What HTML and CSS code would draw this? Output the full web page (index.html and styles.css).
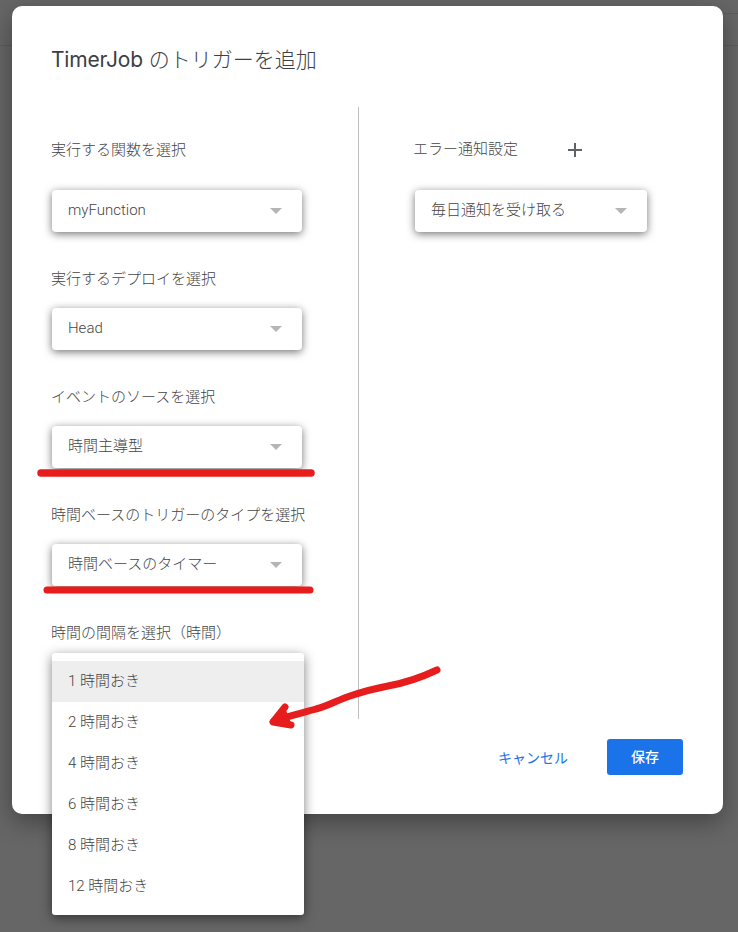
FILE: index.html
```html
<!DOCTYPE html>
<html lang="ja">
<head>
	<meta charset="UTF-8">
	<title>TimerJob のトリガーを追加</title>
	<link rel="stylesheet" href="styles.css">
</head><body>
<div class="PageBar"><div class="PageBarTop"></div></div>

<div class="Dialog">
	<h1 class="Title"><span class="TitleName">TimerJob</span> のトリガーを追加</h1>
	<div class="Columns">
		<div class="ColLeft">
			<div class="Field">
				<div class="Label">実行する関数を選択</div>
				<div class="Select"><span>myFunction</span><i class="Caret"></i></div>
			</div>
			<div class="Field">
				<div class="Label">実行するデプロイを選択</div>
				<div class="Select"><span>Head</span><i class="Caret"></i></div>
			</div>
			<div class="Field">
				<div class="Label">イベントのソースを選択</div>
				<div class="Select"><span class="Ja">時間主導型</span><i class="Caret"></i></div>
			</div>
			<div class="Field">
				<div class="Label">時間ベースのトリガーのタイプを選択</div>
				<div class="Select"><span class="Ja">時間ベースのタイマー</span><i class="Caret"></i></div>
			</div>
			<div class="Field">
				<div class="Label">時間の間隔を選択（時間）</div>
			</div>
		</div>
		<div class="ColRight">
			<div class="Field">
				<div class="Label LabelAdd">エラー通知設定
					<svg class="Plus" width="14" height="14" viewBox="0 0 14 14"><path d="M7 0v14M0 7h14" stroke="#5f6368" stroke-width="2" fill="none"/></svg>
				</div>
				<div class="Select SelectWide"><span class="Ja">毎日通知を受け取る</span><i class="Caret"></i></div>
			</div>
		</div>
	</div>
	<div class="Footer">
		<div class="Cancel">キャンセル</div>
		<div class="Save">保存</div>
	</div>
	<div class="Menu">
		<div class="Item Selected">1 時間おき</div>
		<div class="Item">2 時間おき</div>
		<div class="Item">4 時間おき</div>
		<div class="Item">6 時間おき</div>
		<div class="Item">8 時間おき</div>
		<div class="Item">12 時間おき</div>
	</div>
</div>

<svg class="Marks" width="738" height="932" viewBox="0 0 738 932">
	<g fill="none" stroke="#e71c1c" stroke-linecap="round" stroke-linejoin="round">
		<path d="M41 473H311" stroke-width="7.5"/>
		<path d="M47 590H310" stroke-width="7"/>
		<path d="M437 670C420 678 405 683 388 686C372 689 362 692 350 696C338 700 328 706 316 709C302 713 288 716 274 721" stroke-width="7"/>
		<path d="M285 707L273 722L291 725" stroke-width="7"/>
		<path d="M284 712L278 721L288 722Z" stroke-width="5" fill="#e71c1c"/>
	</g>
</svg>
</body></html>
```

FILE: styles.css
```css
html, body { margin:0; height:932px; overflow:hidden; }
body { background-color:#666; font-family:Roboto, "Noto Sans CJK JP", sans-serif; color:#3c4043; position:relative; }

.PageBar { height:45px; border-bottom:1px solid #5c5c5c; }
.PageBarTop { height:13px; margin-left:723px; border-bottom:1px solid #5c5c5c; }

.Dialog { position:absolute; left:12px; top:6px; width:711px; height:808px; box-sizing:border-box; padding:0 40px 0 39px; background-color:#fff; border-radius:10px; box-shadow:0 8px 24px rgba(0,0,0,.35); }
.Title { margin:0; height:101px; padding-top:41px; box-sizing:border-box; font-family:Inter, "Noto Sans CJK JP", sans-serif; font-size:21px; line-height:26px; font-weight:300; color:#3c4043; }
.TitleName { font-weight:400; letter-spacing:-.2px; }

.Columns { display:flex; height:612px; }
.ColLeft { width:307px; border-right:1px solid #bdbdbd; padding-top:32px; }
.ColRight { padding-left:54px; padding-top:32px; }

.Field { margin-bottom:36px; }
.Label { height:20px; line-height:22px; font-size:15px; font-weight:300; color:#444; margin-bottom:20px; }
.Field:first-child .Label { margin-bottom:31px; }
.LabelAdd { display:flex; align-items:center; }
.Plus { margin-left:50px; margin-top:2px; }

.Select { display:flex; align-items:center; justify-content:space-between; box-sizing:border-box; width:250px; height:42px; margin-left:1px; padding:0 20px 2px 16px; background-color:#fff; border-radius:4px; font-size:15px; font-weight:300; color:#444; box-shadow:0 2px 8px rgba(0,0,0,.55); }
.SelectWide { width:232px; margin-left:2px; }
.Ja { margin-bottom:4px; }
.Caret { width:0; height:0; margin-top:2px; border-left:6px solid transparent; border-right:6px solid transparent; border-top:6px solid #b5b5b5; }

.Footer { display:flex; justify-content:flex-end; align-items:center; margin-top:20px; font-size:14px; }
.Cancel { color:#1a73e8; margin-right:39px; }
.Save { width:76px; height:36px; line-height:36px; text-align:center; background-color:#1a73e8; color:#fff; border-radius:3px; font-weight:500; }

.Menu { position:absolute; left:40px; top:647px; width:252px; box-sizing:border-box; padding:8px 0; background-color:#fff; border-radius:3px; box-shadow:0 3px 12px rgba(0,0,0,.5); }
.Item { height:41px; line-height:41px; padding-left:16px; font-size:15px; font-weight:300; color:#444; }
.Selected { background-color:#eee; }

.Marks { position:absolute; left:0; top:0; pointer-events:none; }
```
